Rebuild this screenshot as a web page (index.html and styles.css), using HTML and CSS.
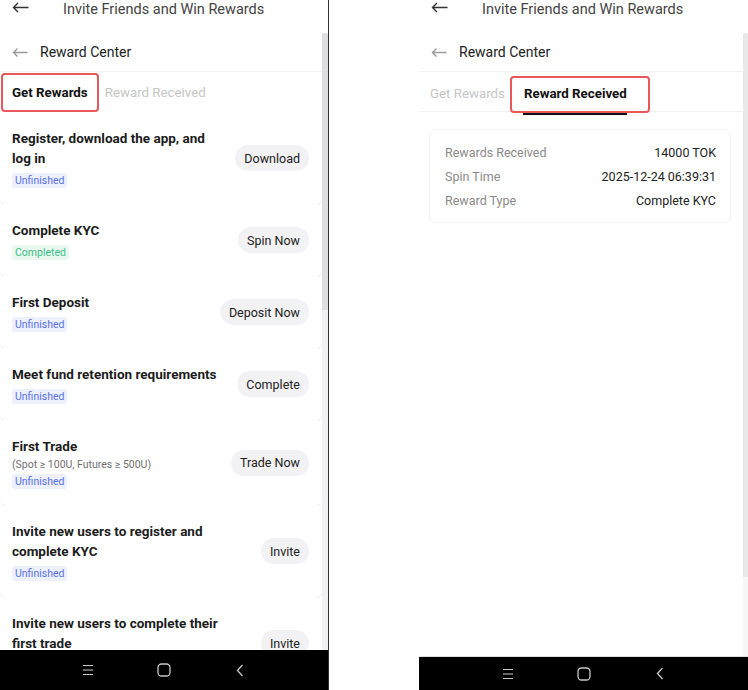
FILE: index.html
```html
<!DOCTYPE html>
<html lang="en">
<head>
    <meta charset="UTF-8">
    <meta name="viewport" content="width=device-width, initial-scale=1.0">
    <title>Reward Center</title>
    <link rel="stylesheet" href="styles.css">
</head>
<body>
    <div class="screens">
        <!-- Get Rewards tab -->
        <section class="phone phone-left">
            <header class="app-bar">
                <svg class="back-icon" width="17" height="11" viewBox="0 0 17 11"><path d="M1.5 5.5h15M6 1L1.5 5.5 6 10" fill="none" stroke="#333" stroke-width="1.4"/></svg>
                <span class="app-title">Invite Friends and Win Rewards</span>
            </header>
            <div class="viewport">
                <div class="scroll-content">
                    <div class="page-head">
                        <svg width="16" height="11" viewBox="0 0 16 11"><path d="M1.5 5.5h14M5.5 1.5L1.5 5.5l4 4" fill="none" stroke="#9a9a9a" stroke-width="1.4"/></svg>
                        <span>Reward Center</span>
                    </div>
                    <nav class="tabs">
                        <span class="tab active">Get Rewards</span>
                        <span class="tab">Reward Received</span>
                    </nav>
                    <ul class="task-list">
                        <li class="task-card">
                            <div class="task-info">
                                <div class="task-title">Register, download the app, and log in</div>
                                <span class="badge badge-open">Unfinished</span>
                            </div>
                            <button class="task-btn">Download</button>
                        </li>
                        <li class="task-card">
                            <div class="task-info">
                                <div class="task-title">Complete KYC</div>
                                <span class="badge badge-done">Completed</span>
                            </div>
                            <button class="task-btn">Spin Now</button>
                        </li>
                        <li class="task-card">
                            <div class="task-info">
                                <div class="task-title">First Deposit</div>
                                <span class="badge badge-open">Unfinished</span>
                            </div>
                            <button class="task-btn">Deposit Now</button>
                        </li>
                        <li class="task-card">
                            <div class="task-info">
                                <div class="task-title">Meet fund retention requirements</div>
                                <span class="badge badge-open">Unfinished</span>
                            </div>
                            <button class="task-btn">Complete</button>
                        </li>
                        <li class="task-card">
                            <div class="task-info">
                                <div class="task-title">First Trade</div>
                                <div class="task-sub">(Spot ≥ 100U, Futures ≥ 500U)</div>
                                <span class="badge badge-open">Unfinished</span>
                            </div>
                            <button class="task-btn">Trade Now</button>
                        </li>
                        <li class="task-card">
                            <div class="task-info">
                                <div class="task-title">Invite new users to register and complete KYC</div>
                                <span class="badge badge-open">Unfinished</span>
                            </div>
                            <button class="task-btn">Invite</button>
                        </li>
                        <li class="task-card">
                            <div class="task-info">
                                <div class="task-title">Invite new users to complete their first trade</div>
                                <span class="badge badge-open">Unfinished</span>
                            </div>
                            <button class="task-btn">Invite</button>
                        </li>
                    </ul>
                </div>
                <div class="scrollbar"><div class="thumb thumb-left"></div></div>
            </div>
            <div class="nav-bar nav-left">
                <svg width="12" height="12" viewBox="0 0 12 12"><path d="M1 1.5h10M1 6h10M1 10.5h10" stroke="#c8c8c8" stroke-width="1.2"/></svg>
                <svg width="14" height="14" viewBox="0 0 14 14"><rect x="1" y="1" width="12" height="12" rx="3.5" fill="none" stroke="#c8c8c8" stroke-width="1.3"/></svg>
                <svg width="8" height="13" viewBox="0 0 8 13"><path d="M6.5 1L1.5 6.5l5 5.5" fill="none" stroke="#c8c8c8" stroke-width="1.3"/></svg>
            </div>
            <div class="callout callout-left"></div>
        </section>

        <!-- Reward Received tab -->
        <section class="phone phone-right">
            <header class="app-bar">
                <svg class="back-icon" width="17" height="11" viewBox="0 0 17 11"><path d="M1.5 5.5h15M6 1L1.5 5.5 6 10" fill="none" stroke="#333" stroke-width="1.4"/></svg>
                <span class="app-title">Invite Friends and Win Rewards</span>
            </header>
            <div class="viewport">
                <div class="scroll-content">
                    <div class="page-head">
                        <svg width="16" height="11" viewBox="0 0 16 11"><path d="M1.5 5.5h14M5.5 1.5L1.5 5.5l4 4" fill="none" stroke="#9a9a9a" stroke-width="1.4"/></svg>
                        <span>Reward Center</span>
                    </div>
                    <nav class="tabs tabs-right">
                        <span class="tab">Get Rewards</span>
                        <span class="tab active underlined">Reward Received</span>
                    </nav>
                    <div class="record-card">
                        <div class="record-row"><span>Rewards Received</span><span class="record-value">14000 TOK</span></div>
                        <div class="record-row"><span>Spin Time</span><span class="record-value">2025-12-24 06:39:31</span></div>
                        <div class="record-row"><span>Reward Type</span><span class="record-value">Complete KYC</span></div>
                    </div>
                </div>
                <div class="scrollbar scrollbar-thin"><div class="thumb thumb-right"></div></div>
            </div>
            <div class="nav-bar nav-right">
                <svg width="12" height="12" viewBox="0 0 12 12"><path d="M1 1.5h10M1 6h10M1 10.5h10" stroke="#c8c8c8" stroke-width="1.2"/></svg>
                <svg width="14" height="14" viewBox="0 0 14 14"><rect x="1" y="1" width="12" height="12" rx="3.5" fill="none" stroke="#c8c8c8" stroke-width="1.3"/></svg>
                <svg width="8" height="13" viewBox="0 0 8 13"><path d="M6.5 1L1.5 6.5l5 5.5" fill="none" stroke="#c8c8c8" stroke-width="1.3"/></svg>
            </div>
            <div class="callout callout-right"></div>
        </section>
    </div>
</body>
</html>
```

FILE: styles.css
```css
:root {
    --text-main: #1c1c1c;
    --text-muted: #8a8a8a;
    --text-faint: #c6c6c6;
    --line: #f1f1f1;
    --btn-bg: #f2f2f4;
    --callout: #e8575a;
}

* {
    box-sizing: border-box;
}

body {
    margin: 0;
    background: #fff;
    font-family: Roboto, 'Noto Sans', Arial, sans-serif;
    color: var(--text-main);
}

.screens {
    display: flex;
    gap: 90px;
    width: 748px;
    height: 690px;
    overflow: hidden;
}

.phone {
    position: relative;
    display: flex;
    flex-direction: column;
    width: 329px;
    height: 690px;
    background: #fff;
    overflow: hidden;
}

.phone-left {
    width: 329px;
    border-right: 1.5px solid #333;
}

/* Top app bar (cut at the top edge) */
.app-bar {
    display: flex;
    align-items: flex-start;
    height: 33px;
    flex-shrink: 0;
    padding-left: 12px;
}

.back-icon {
    margin-top: 2px;
}

.app-title {
    margin-left: 34px;
    font-size: 14.5px;
    line-height: 20px;
    color: #444;
}

.viewport {
    display: flex;
    flex: 1;
    min-height: 0;
}

.scroll-content {
    flex: 1;
    min-width: 0;
    overflow: hidden;
}

.page-head {
    display: flex;
    align-items: center;
    gap: 12px;
    height: 39px;
    padding-left: 12px;
    font-size: 14px;
    color: #222;
    border-bottom: 1px solid var(--line);
}

.tabs {
    display: flex;
    gap: 17px;
    height: 40px;
    align-items: center;
    padding-left: 12px;
    font-size: 13.3px;
}

.tabs-right {
    gap: 19px;
    padding-left: 11px;
    padding-top: 3px;
    border-bottom: 1px solid var(--line);
}

.tab {
    position: relative;
    color: var(--text-faint);
}

.tab.active {
    color: #111;
    font-weight: 700;
}

.tab.underlined::after {
    content: "";
    position: absolute;
    left: -1px;
    right: 0;
    bottom: -14px;
    height: 3px;
    background: #111;
}

/* Task cards */
.task-list {
    list-style: none;
    margin: 0;
    padding: 0;
}

.task-card {
    display: flex;
    align-items: center;
    justify-content: space-between;
    padding: 16px 13px 16px 12px;
    border-radius: 6px;
    background: #fff;
    box-shadow: 0 1px 2px rgba(0, 0, 0, 0.07);
}

.task-info {
    display: flex;
    flex-direction: column;
    align-items: flex-start;
    max-width: 210px;
}

.task-title {
    font-size: 13.5px;
    font-weight: 700;
    line-height: 20px;
}

.task-sub {
    font-size: 10.5px;
    line-height: 18px;
    color: #707070;
}

.badge {
    margin-top: 5px;
    padding: 0 3px;
    height: 15px;
    line-height: 15px;
    font-size: 10.5px;
    border-radius: 3px;
}

.task-sub + .badge {
    margin-top: 0;
}

.badge-open {
    background: #edf0fd;
    color: #5b72e6;
}

.badge-done {
    background: #e9f8f1;
    color: #3dbf86;
}

.task-btn {
    flex-shrink: 0;
    height: 26px;
    padding: 0 9px;
    border: none;
    border-radius: 13px;
    background: var(--btn-bg);
    font-family: inherit;
    font-size: 12.5px;
    color: #222;
}

/* Reward record */
.record-card {
    margin: 17px 12px 0 10px;
    padding: 11px 14px 9px 15px;
    border: 1px solid #f2f2f2;
    border-radius: 6px;
}

.record-row {
    display: flex;
    justify-content: space-between;
    line-height: 24px;
    font-size: 12.5px;
    color: var(--text-muted);
}

.record-value {
    color: #222;
}

/* Scrollbars */
.scrollbar {
    width: 6px;
    flex-shrink: 0;
    background: #f1f1f3;
}

.scrollbar-thin {
    width: 5px;
    background: #f7f7f7;
}

.thumb {
    border-radius: 3px 3px 0 0;
    background: #dedee0;
}

.thumb-left {
    height: 277px;
}

.thumb-right {
    height: 544px;
    background: #e8e8e8;
}

/* System nav bar */
.nav-bar {
    display: grid;
    grid-template-columns: repeat(3, 76px);
    justify-content: center;
    justify-items: center;
    align-items: center;
    flex-shrink: 0;
    background: #000;
}

.nav-left {
    height: 40px;
}

.nav-right {
    height: 34px;
    border-top: 1px solid #ddd;
}

/* Red annotation boxes */
.callout {
    position: absolute;
    border: 2px solid var(--callout);
    border-radius: 4px;
}

.callout-left {
    left: 1px;
    top: 73px;
    width: 98px;
    height: 39px;
}

.callout-right {
    left: 91px;
    top: 76px;
    width: 140px;
    height: 37px;
}
```
